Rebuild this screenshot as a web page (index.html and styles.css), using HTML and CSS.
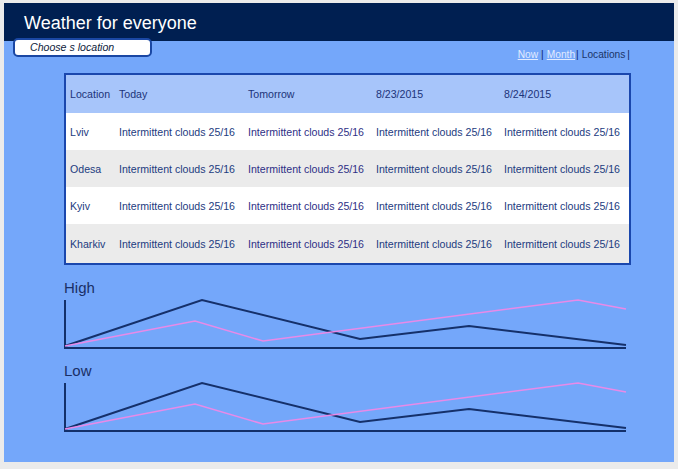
FILE: index.html
```html
<!DOCTYPE html>
<html>
<head>
<meta charset="utf-8">
<link rel="stylesheet" href="styles.css">
</head>
<body>
<div class="panel">
  <header class="header">
    <h1 class="title">Weather for everyone</h1>
  </header>
  <div class="toolbar">
    <div class="location-box">Choose s location</div>
    <nav class="nav">
      <a class="nav-link" href="#">Now</a><span class="sep sp">|</span><a class="nav-link" href="#">Month</a><span class="sep sm">|</span><span class="nav-current">Locations</span><span class="sep sl">|</span>
    </nav>
  </div>
  <table class="forecast">
    <colgroup>
      <col class="c-loc"><col class="c-day"><col class="c-day2"><col class="c-day2"><col class="c-day">
    </colgroup>
    <thead>
      <tr class="head-row">
        <th>Location</th><th>Today</th><th>Tomorrow</th><th>8/23/2015</th><th>8/24/2015</th>
      </tr>
    </thead>
    <tbody>
      <tr class="row odd"><td>Lviv</td><td>Intermittent clouds 25/16</td><td>Intermittent clouds 25/16</td><td>Intermittent clouds 25/16</td><td>Intermittent clouds 25/16</td></tr>
      <tr class="row even"><td>Odesa</td><td>Intermittent clouds 25/16</td><td>Intermittent clouds 25/16</td><td>Intermittent clouds 25/16</td><td>Intermittent clouds 25/16</td></tr>
      <tr class="row odd"><td>Kyiv</td><td>Intermittent clouds 25/16</td><td>Intermittent clouds 25/16</td><td>Intermittent clouds 25/16</td><td>Intermittent clouds 25/16</td></tr>
      <tr class="row even last"><td>Kharkiv</td><td>Intermittent clouds 25/16</td><td>Intermittent clouds 25/16</td><td>Intermittent clouds 25/16</td><td>Intermittent clouds 25/16</td></tr>
    </tbody>
  </table>
  <section class="charts">
    <div class="chart">
      <div class="chart-label">High</div>
      <svg class="chart-svg" width="570" height="56" viewBox="0 0 570 56">
        <line x1="5" y1="4" x2="5" y2="53" class="axis"/>
        <line x1="4" y1="52" x2="566" y2="52" class="axis"/>
        <polyline class="line-navy" points="5,50 142,4 300,43 409,30 566,49"/>
        <polyline class="line-violet" points="5,50 135,25 203,45 518,4 566,13"/>
      </svg>
    </div>
    <div class="chart">
      <div class="chart-label">Low</div>
      <svg class="chart-svg" width="570" height="56" viewBox="0 0 570 56">
        <line x1="5" y1="4" x2="5" y2="53" class="axis"/>
        <line x1="4" y1="52" x2="566" y2="52" class="axis"/>
        <polyline class="line-navy" points="5,50 142,4 300,43 409,30 566,49"/>
        <polyline class="line-violet" points="5,50 135,25 203,45 518,4 566,13"/>
      </svg>
    </div>
  </section>
</div>
</body>
</html>
```

FILE: styles.css
```css
* { box-sizing: border-box; }
html, body { margin: 0; padding: 0; }
body {
  background: #ebebeb;
  font-family: "Liberation Sans", Arial, sans-serif;
  width: 678px;
  height: 469px;
  overflow: hidden;
}
.panel {
  margin: 3px 0 0 4px;
  width: 670px;
  height: 459px;
  background: #74a7fa;
}
.header {
  height: 38px;
  background: #001f51;
  padding: 10px 0 0 20px;
}
.title {
  margin: 0;
  font-size: 18px;
  line-height: 21px;
  font-weight: normal;
  color: #ffffff;
}
.toolbar {
  display: flex;
  justify-content: space-between;
  align-items: flex-start;
  margin-top: -3px;
  padding: 0 44px 0 9px;
  height: 35px;
}
.location-box {
  width: 139px;
  height: 19px;
  background: #ffffff;
  border: 2px solid #1a47a3;
  border-radius: 5px;
  font-size: 10.6px;
  font-style: italic;
  line-height: 15px;
  padding-left: 15px;
  color: #0c1a3a;
}
.nav {
  font-size: 10.2px;
  line-height: 12px;
  padding-top: 11px;
  color: #1a3568;
}
.nav-link {
  color: #e1ebff;
  text-decoration: underline;
}
.sep { color: #102a66; }
.sep.sp { margin: 0 3px 0 3px; }
.sep.sm { margin: 0 3px 0 1px; }
.sep.sl { margin: 0 0 0 2px; }
.nav-current { color: #1a3568; }
.forecast {
  margin-left: 60px;
  width: 567px;
  border-collapse: separate;
  border-spacing: 0;
  table-layout: fixed;
  border: 2px solid #1a47ad;
  font-size: 10.6px;
  color: #1c3b80;
}
.c-loc { width: 49px; }
.c-day { width: 129px; }
.c-day2 { width: 128px; }
.forecast th, .forecast td {
  padding: 0 0 0 4px;
  text-align: left;
  font-weight: normal;
  white-space: nowrap;
  overflow: hidden;
  vertical-align: middle;
}
.head-row { background: #a7c5fa; height: 38px; }
.head-row th { color: #1c3479; }
.row { height: 37px; }
.row.last { height: 39px; }
.odd { background: #ffffff; }
.even { background: #ebebeb; }
.row td:nth-child(3) { color: #2e2f86; }
.charts {
  margin: 14px 0 0 60px;
}
.chart { margin-bottom: 10px; }
.chart-label {
  font-size: 15px;
  line-height: 17px;
  color: #1a2f66;
}
.chart-svg { display: block; margin-left: -4px; }
.axis { stroke: #13306a; stroke-width: 2; }
.line-navy { fill: none; stroke: #15306a; stroke-width: 2; }
.line-violet { fill: none; stroke: #e88ae8; stroke-width: 1.5; }
```
